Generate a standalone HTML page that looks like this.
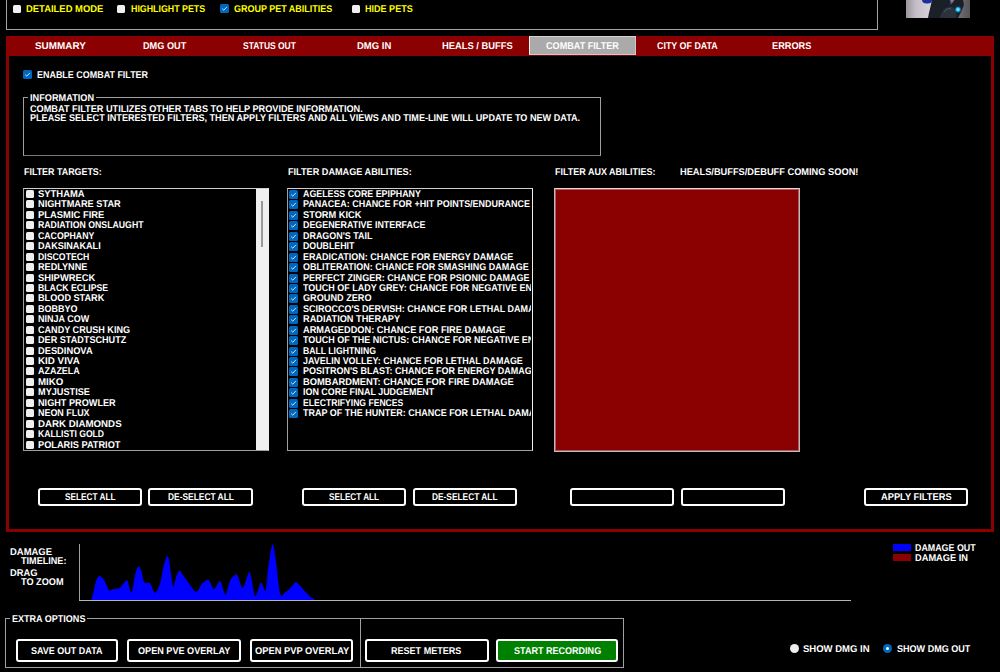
<!DOCTYPE html>
<html><head><meta charset="utf-8"><style>
html,body{margin:0;padding:0;background:#000;width:1000px;height:672px;overflow:hidden;font-family:"Liberation Sans",sans-serif}
</style></head><body>
<div style="position:absolute;left:6px;top:-10px;width:872px;height:40px;box-sizing:border-box;border:1px solid #a4a4a4"></div>
<div style="position:absolute;left:13px;top:5px;width:8px;height:8px;background:#efefef;border-radius:1.5px"></div>
<div style="position:absolute;left:117px;top:5px;width:8px;height:8px;background:#efefef;border-radius:1.5px"></div>
<div style="position:absolute;left:220px;top:4px;width:9px;height:9px;background:#0067c0;border-radius:1.5px"><svg width="9" height="9" style="position:absolute;left:0;top:0"><path d="M2.2 4.6 L3.8 6.2 L6.9 2.9" fill="none" stroke="#d0e4f7" stroke-width="1"/></svg></div>
<div style="position:absolute;left:352px;top:5px;width:8px;height:8px;background:#efefef;border-radius:1.5px"></div>
<svg style="position:absolute;left:906px;top:0" width="64" height="18" viewBox="0 0 64 18">
<defs><linearGradient id="g1" x1="0" y1="0" x2="1" y2="0"><stop offset="0" stop-color="#9a949c"/><stop offset="0.15" stop-color="#c4bcc6"/><stop offset="0.38" stop-color="#d8d2da"/><stop offset="0.62" stop-color="#8c8a8e"/><stop offset="1" stop-color="#555456"/></linearGradient>
<radialGradient id="g2"><stop offset="0" stop-color="#b0ffff"/><stop offset="0.45" stop-color="#20c8ff"/><stop offset="1" stop-color="#0090ff" stop-opacity="0"/></radialGradient></defs>
<rect width="64" height="18" fill="url(#g1)"/>
<path d="M26,0 L44,0 L45.5,4 L48.5,0 L57,0 L58,5 L55,12 L52,18 L22,18 C23,12 25,5 26,0 Z" fill="#1b1f27"/>
<path d="M34,18 C35,11 40,6 46,7 C50,9 51,13 50,18 Z" fill="#2c323c"/>
<path d="M38,12 C40,9 43,8 45,9" stroke="#5a6472" stroke-width="0.8" fill="none"/>
<path d="M16,0 L26,0 L25.5,2.5 C23,4 19,4 16.5,2 Z" fill="#1830a0"/>
<path d="M44,2 L45.5,2.5 L45,4.5 L43.8,4 Z" fill="#2040c0"/>
<circle cx="52" cy="9.5" r="3.6" fill="url(#g2)"/>
</svg>
<div style="position:absolute;left:6px;top:36px;width:988px;height:496px;background:#8b0000"></div>
<div style="position:absolute;left:9px;top:56px;width:982px;height:473px;background:#000"></div>
<div style="position:absolute;left:529px;top:36px;width:107px;height:19px;box-sizing:border-box;background:#aaaaaa;border:1px solid #c4cccc;border-left-color:#f4f4f4;border-top-color:#d4d4d4"></div>
<div style="position:absolute;left:23px;top:70px;width:9px;height:9px;background:#0067c0;border-radius:1.5px"><svg width="9" height="9" style="position:absolute;left:0;top:0"><path d="M2.2 4.6 L3.8 6.2 L6.9 2.9" fill="none" stroke="#d0e4f7" stroke-width="1"/></svg></div>
<div style="position:absolute;left:23px;top:97px;width:578px;height:59px;box-sizing:border-box;border:1px solid #a0a0a0;border-bottom-color:#787878"></div>
<div style="position:absolute;left:28px;top:94px;width:68px;height:6px;background:#000"></div>
<div style="position:absolute;left:23px;top:188px;width:246px;height:263px;box-sizing:border-box;border:1px solid #a0a0a0;border-top-color:#d0d0d0;border-right-color:#f0f0f0"></div>
<div style="position:absolute;left:256px;top:189px;width:12px;height:261px;background:#f0f0f0"></div>
<div style="position:absolute;left:261px;top:201px;width:2px;height:46px;background:#9a9a9a"></div>
<div style="position:absolute;left:26px;top:190px;width:8px;height:8px;background:#efefef;border-radius:1.5px"></div>
<div style="position:absolute;left:26px;top:200px;width:8px;height:8px;background:#efefef;border-radius:1.5px"></div>
<div style="position:absolute;left:26px;top:211px;width:8px;height:8px;background:#efefef;border-radius:1.5px"></div>
<div style="position:absolute;left:26px;top:221px;width:8px;height:8px;background:#efefef;border-radius:1.5px"></div>
<div style="position:absolute;left:26px;top:232px;width:8px;height:8px;background:#efefef;border-radius:1.5px"></div>
<div style="position:absolute;left:26px;top:242px;width:8px;height:8px;background:#efefef;border-radius:1.5px"></div>
<div style="position:absolute;left:26px;top:253px;width:8px;height:8px;background:#efefef;border-radius:1.5px"></div>
<div style="position:absolute;left:26px;top:263px;width:8px;height:8px;background:#efefef;border-radius:1.5px"></div>
<div style="position:absolute;left:26px;top:274px;width:8px;height:8px;background:#efefef;border-radius:1.5px"></div>
<div style="position:absolute;left:26px;top:284px;width:8px;height:8px;background:#efefef;border-radius:1.5px"></div>
<div style="position:absolute;left:26px;top:294px;width:8px;height:8px;background:#efefef;border-radius:1.5px"></div>
<div style="position:absolute;left:26px;top:305px;width:8px;height:8px;background:#efefef;border-radius:1.5px"></div>
<div style="position:absolute;left:26px;top:315px;width:8px;height:8px;background:#efefef;border-radius:1.5px"></div>
<div style="position:absolute;left:26px;top:326px;width:8px;height:8px;background:#efefef;border-radius:1.5px"></div>
<div style="position:absolute;left:26px;top:336px;width:8px;height:8px;background:#efefef;border-radius:1.5px"></div>
<div style="position:absolute;left:26px;top:347px;width:8px;height:8px;background:#efefef;border-radius:1.5px"></div>
<div style="position:absolute;left:26px;top:357px;width:8px;height:8px;background:#efefef;border-radius:1.5px"></div>
<div style="position:absolute;left:26px;top:367px;width:8px;height:8px;background:#efefef;border-radius:1.5px"></div>
<div style="position:absolute;left:26px;top:378px;width:8px;height:8px;background:#efefef;border-radius:1.5px"></div>
<div style="position:absolute;left:26px;top:388px;width:8px;height:8px;background:#efefef;border-radius:1.5px"></div>
<div style="position:absolute;left:26px;top:399px;width:8px;height:8px;background:#efefef;border-radius:1.5px"></div>
<div style="position:absolute;left:26px;top:409px;width:8px;height:8px;background:#efefef;border-radius:1.5px"></div>
<div style="position:absolute;left:26px;top:420px;width:8px;height:8px;background:#efefef;border-radius:1.5px"></div>
<div style="position:absolute;left:26px;top:430px;width:8px;height:8px;background:#efefef;border-radius:1.5px"></div>
<div style="position:absolute;left:26px;top:441px;width:8px;height:8px;background:#efefef;border-radius:1.5px"></div>
<div style="position:absolute;left:287px;top:188px;width:246px;height:263px;box-sizing:border-box;border:1px solid #a0a0a0;border-top-color:#d0d0d0;border-right-color:#f0f0f0"></div>
<div style="position:absolute;left:289px;top:190px;width:9px;height:9px;background:#0067c0;border-radius:1.5px"><svg width="9" height="9" style="position:absolute;left:0;top:0"><path d="M2.2 4.6 L3.8 6.2 L6.9 2.9" fill="none" stroke="#d0e4f7" stroke-width="1"/></svg></div>
<div style="position:absolute;left:289px;top:200px;width:9px;height:9px;background:#0067c0;border-radius:1.5px"><svg width="9" height="9" style="position:absolute;left:0;top:0"><path d="M2.2 4.6 L3.8 6.2 L6.9 2.9" fill="none" stroke="#d0e4f7" stroke-width="1"/></svg></div>
<div style="position:absolute;left:289px;top:211px;width:9px;height:9px;background:#0067c0;border-radius:1.5px"><svg width="9" height="9" style="position:absolute;left:0;top:0"><path d="M2.2 4.6 L3.8 6.2 L6.9 2.9" fill="none" stroke="#d0e4f7" stroke-width="1"/></svg></div>
<div style="position:absolute;left:289px;top:221px;width:9px;height:9px;background:#0067c0;border-radius:1.5px"><svg width="9" height="9" style="position:absolute;left:0;top:0"><path d="M2.2 4.6 L3.8 6.2 L6.9 2.9" fill="none" stroke="#d0e4f7" stroke-width="1"/></svg></div>
<div style="position:absolute;left:289px;top:232px;width:9px;height:9px;background:#0067c0;border-radius:1.5px"><svg width="9" height="9" style="position:absolute;left:0;top:0"><path d="M2.2 4.6 L3.8 6.2 L6.9 2.9" fill="none" stroke="#d0e4f7" stroke-width="1"/></svg></div>
<div style="position:absolute;left:289px;top:242px;width:9px;height:9px;background:#0067c0;border-radius:1.5px"><svg width="9" height="9" style="position:absolute;left:0;top:0"><path d="M2.2 4.6 L3.8 6.2 L6.9 2.9" fill="none" stroke="#d0e4f7" stroke-width="1"/></svg></div>
<div style="position:absolute;left:289px;top:253px;width:9px;height:9px;background:#0067c0;border-radius:1.5px"><svg width="9" height="9" style="position:absolute;left:0;top:0"><path d="M2.2 4.6 L3.8 6.2 L6.9 2.9" fill="none" stroke="#d0e4f7" stroke-width="1"/></svg></div>
<div style="position:absolute;left:289px;top:263px;width:9px;height:9px;background:#0067c0;border-radius:1.5px"><svg width="9" height="9" style="position:absolute;left:0;top:0"><path d="M2.2 4.6 L3.8 6.2 L6.9 2.9" fill="none" stroke="#d0e4f7" stroke-width="1"/></svg></div>
<div style="position:absolute;left:289px;top:274px;width:9px;height:9px;background:#0067c0;border-radius:1.5px"><svg width="9" height="9" style="position:absolute;left:0;top:0"><path d="M2.2 4.6 L3.8 6.2 L6.9 2.9" fill="none" stroke="#d0e4f7" stroke-width="1"/></svg></div>
<div style="position:absolute;left:289px;top:284px;width:9px;height:9px;background:#0067c0;border-radius:1.5px"><svg width="9" height="9" style="position:absolute;left:0;top:0"><path d="M2.2 4.6 L3.8 6.2 L6.9 2.9" fill="none" stroke="#d0e4f7" stroke-width="1"/></svg></div>
<div style="position:absolute;left:289px;top:294px;width:9px;height:9px;background:#0067c0;border-radius:1.5px"><svg width="9" height="9" style="position:absolute;left:0;top:0"><path d="M2.2 4.6 L3.8 6.2 L6.9 2.9" fill="none" stroke="#d0e4f7" stroke-width="1"/></svg></div>
<div style="position:absolute;left:289px;top:305px;width:9px;height:9px;background:#0067c0;border-radius:1.5px"><svg width="9" height="9" style="position:absolute;left:0;top:0"><path d="M2.2 4.6 L3.8 6.2 L6.9 2.9" fill="none" stroke="#d0e4f7" stroke-width="1"/></svg></div>
<div style="position:absolute;left:289px;top:315px;width:9px;height:9px;background:#0067c0;border-radius:1.5px"><svg width="9" height="9" style="position:absolute;left:0;top:0"><path d="M2.2 4.6 L3.8 6.2 L6.9 2.9" fill="none" stroke="#d0e4f7" stroke-width="1"/></svg></div>
<div style="position:absolute;left:289px;top:326px;width:9px;height:9px;background:#0067c0;border-radius:1.5px"><svg width="9" height="9" style="position:absolute;left:0;top:0"><path d="M2.2 4.6 L3.8 6.2 L6.9 2.9" fill="none" stroke="#d0e4f7" stroke-width="1"/></svg></div>
<div style="position:absolute;left:289px;top:336px;width:9px;height:9px;background:#0067c0;border-radius:1.5px"><svg width="9" height="9" style="position:absolute;left:0;top:0"><path d="M2.2 4.6 L3.8 6.2 L6.9 2.9" fill="none" stroke="#d0e4f7" stroke-width="1"/></svg></div>
<div style="position:absolute;left:289px;top:347px;width:9px;height:9px;background:#0067c0;border-radius:1.5px"><svg width="9" height="9" style="position:absolute;left:0;top:0"><path d="M2.2 4.6 L3.8 6.2 L6.9 2.9" fill="none" stroke="#d0e4f7" stroke-width="1"/></svg></div>
<div style="position:absolute;left:289px;top:357px;width:9px;height:9px;background:#0067c0;border-radius:1.5px"><svg width="9" height="9" style="position:absolute;left:0;top:0"><path d="M2.2 4.6 L3.8 6.2 L6.9 2.9" fill="none" stroke="#d0e4f7" stroke-width="1"/></svg></div>
<div style="position:absolute;left:289px;top:367px;width:9px;height:9px;background:#0067c0;border-radius:1.5px"><svg width="9" height="9" style="position:absolute;left:0;top:0"><path d="M2.2 4.6 L3.8 6.2 L6.9 2.9" fill="none" stroke="#d0e4f7" stroke-width="1"/></svg></div>
<div style="position:absolute;left:289px;top:378px;width:9px;height:9px;background:#0067c0;border-radius:1.5px"><svg width="9" height="9" style="position:absolute;left:0;top:0"><path d="M2.2 4.6 L3.8 6.2 L6.9 2.9" fill="none" stroke="#d0e4f7" stroke-width="1"/></svg></div>
<div style="position:absolute;left:289px;top:388px;width:9px;height:9px;background:#0067c0;border-radius:1.5px"><svg width="9" height="9" style="position:absolute;left:0;top:0"><path d="M2.2 4.6 L3.8 6.2 L6.9 2.9" fill="none" stroke="#d0e4f7" stroke-width="1"/></svg></div>
<div style="position:absolute;left:289px;top:399px;width:9px;height:9px;background:#0067c0;border-radius:1.5px"><svg width="9" height="9" style="position:absolute;left:0;top:0"><path d="M2.2 4.6 L3.8 6.2 L6.9 2.9" fill="none" stroke="#d0e4f7" stroke-width="1"/></svg></div>
<div style="position:absolute;left:289px;top:409px;width:9px;height:9px;background:#0067c0;border-radius:1.5px"><svg width="9" height="9" style="position:absolute;left:0;top:0"><path d="M2.2 4.6 L3.8 6.2 L6.9 2.9" fill="none" stroke="#d0e4f7" stroke-width="1"/></svg></div>
<div style="position:absolute;left:554px;top:188px;width:246px;height:264px;box-sizing:border-box;border:1px solid #b8bec6;border-top-color:#dcdcdc;background:#8b0000;box-shadow:inset 0 0 0 1px rgba(255,190,190,0.45)"></div>
<div style="position:absolute;left:38px;top:488px;width:104px;height:18px;box-sizing:border-box;border:2px solid #fff;border-radius:3px;background:#000"></div>
<div style="position:absolute;left:148px;top:488px;width:105px;height:18px;box-sizing:border-box;border:2px solid #fff;border-radius:3px;background:#000"></div>
<div style="position:absolute;left:302px;top:488px;width:104px;height:18px;box-sizing:border-box;border:2px solid #fff;border-radius:3px;background:#000"></div>
<div style="position:absolute;left:413px;top:488px;width:104px;height:18px;box-sizing:border-box;border:2px solid #fff;border-radius:3px;background:#000"></div>
<div style="position:absolute;left:570px;top:488px;width:104px;height:18px;box-sizing:border-box;border:2px solid #fff;border-radius:3px;background:#000"></div>
<div style="position:absolute;left:681px;top:488px;width:104px;height:18px;box-sizing:border-box;border:2px solid #fff;border-radius:3px;background:#000"></div>
<div style="position:absolute;left:864px;top:488px;width:104px;height:18px;box-sizing:border-box;border:2px solid #fff;border-radius:3px;background:#000"></div>
<div style="position:absolute;left:79px;top:544px;width:1px;height:57px;background:#a0a0a0"></div>
<div style="position:absolute;left:79px;top:600px;width:772px;height:1px;background:#b4b4b4"></div>
<svg style="position:absolute;left:0;top:0" width="1000" height="672"><path d="M91.2,600.5 C91.60,599.02 92.80,594.82 93.60,591.60 C94.40,588.38 95.07,583.80 96.00,581.20 C96.93,578.60 98.13,576.53 99.20,576.00 C100.27,575.47 101.47,577.13 102.40,578.00 C103.33,578.87 103.73,579.20 104.80,581.20 C105.87,583.20 107.87,588.47 108.80,590.00 C109.73,591.53 109.47,590.60 110.40,590.40 C111.33,590.20 112.93,589.17 114.40,588.80 C115.87,588.43 118.00,588.67 119.20,588.20 C120.40,587.73 120.47,587.30 121.60,586.00 C122.73,584.70 124.93,581.07 126.00,580.40 C127.07,579.73 127.07,580.00 128.00,582.00 C128.93,584.00 130.40,593.73 131.60,592.40 C132.80,591.07 134.07,578.33 135.20,574.00 C136.33,569.67 137.40,566.93 138.40,566.40 C139.40,565.87 140.20,568.13 141.20,570.80 C142.20,573.47 143.13,580.43 144.40,582.40 C145.67,584.37 147.67,582.13 148.80,582.60 C149.93,583.07 150.13,583.50 151.20,585.20 C152.27,586.90 153.73,593.07 155.20,592.80 C156.67,592.53 158.58,588.10 160.00,583.60 C161.42,579.10 162.55,570.30 163.70,565.80 C164.85,561.30 165.98,557.52 166.90,556.60 C167.82,555.68 168.50,557.23 169.20,560.30 C169.90,563.37 170.40,570.62 171.10,575.00 C171.80,579.38 172.57,586.28 173.40,586.60 C174.23,586.92 175.10,579.60 176.10,576.90 C177.10,574.20 178.25,570.72 179.40,570.40 C180.55,570.08 181.62,573.15 183.00,575.00 C184.38,576.85 185.53,578.72 187.70,581.50 C189.87,584.28 193.70,591.23 196.00,591.70 C198.30,592.17 199.67,586.23 201.50,584.30 C203.33,582.37 205.62,580.57 207.00,580.10 C208.38,579.63 208.63,580.03 209.80,581.50 C210.97,582.97 212.38,588.93 214.00,588.90 C215.62,588.87 218.20,582.07 219.50,581.30 C220.80,580.53 220.80,582.12 221.80,584.30 C222.80,586.48 224.12,595.02 225.50,594.40 C226.88,593.78 228.47,583.87 230.10,580.60 C231.73,577.33 234.02,575.57 235.30,574.80 C236.58,574.03 236.55,573.87 237.80,576.00 C239.05,578.13 240.95,588.22 242.80,587.60 C244.65,586.98 247.50,574.07 248.90,572.30 C250.30,570.53 250.13,573.07 251.20,577.00 C252.27,580.93 253.68,594.98 255.30,595.90 C256.92,596.82 259.20,583.38 260.90,582.50 C262.60,581.62 264.28,593.07 265.50,590.60 C266.72,588.13 267.05,575.40 268.20,567.70 C269.35,560.00 271.17,545.93 272.40,544.40 C273.63,542.87 274.30,550.30 275.60,558.50 C276.90,566.70 278.65,587.92 280.20,593.60 C281.75,599.28 283.20,593.53 284.90,592.60 C286.60,591.67 288.63,589.72 290.40,588.00 C292.17,586.28 293.97,582.77 295.50,582.30 C297.03,581.83 297.37,583.02 299.60,585.20 C301.83,587.38 306.12,592.85 308.90,595.40 C311.68,597.95 315.07,599.65 316.30,600.50 Z" fill="#0000ff"/></svg>
<div style="position:absolute;left:79px;top:600px;width:772px;height:1px;background:#b4b4b4"></div>
<div style="position:absolute;left:893px;top:544px;width:18px;height:7px;background:#0000ff"></div>
<div style="position:absolute;left:893px;top:554px;width:18px;height:7px;background:#8b0000"></div>
<div style="position:absolute;left:5px;top:618px;width:619px;height:50px;box-sizing:border-box;border:1px solid #a0a0a0"></div>
<div style="position:absolute;left:10px;top:614px;width:77px;height:9px;background:#000"></div>
<div style="position:absolute;left:360px;top:618px;width:1px;height:50px;background:#a0a0a0"></div>
<div style="position:absolute;left:16px;top:639px;width:102px;height:23px;box-sizing:border-box;border:2px solid #fff;border-radius:3px;background:#000"></div>
<div style="position:absolute;left:127px;top:639px;width:114px;height:23px;box-sizing:border-box;border:2px solid #fff;border-radius:3px;background:#000"></div>
<div style="position:absolute;left:250px;top:639px;width:103px;height:23px;box-sizing:border-box;border:2px solid #fff;border-radius:3px;background:#000"></div>
<div style="position:absolute;left:365px;top:639px;width:124px;height:23px;box-sizing:border-box;border:2px solid #fff;border-radius:3px;background:#000"></div>
<div style="position:absolute;left:496px;top:639px;width:122px;height:23px;box-sizing:border-box;border:2px solid #fff;border-radius:3px;background:#008000"></div>
<div style="position:absolute;left:790px;top:644px;width:9px;height:9px;border-radius:50%;background:#efefef"></div>
<div style="position:absolute;left:883px;top:644px;width:9px;height:9px;border-radius:50%;background:#0067c0"><div style="position:absolute;left:3px;top:3px;width:3px;height:3px;border-radius:50%;background:#fff"></div></div>
<div style="position:absolute;left:26.00px;top:5px;font:bold 9.8px/10px 'Liberation Sans',sans-serif;text-rendering:geometricPrecision;color:#ffff00;white-space:pre;transform:scaleX(0.9625);transform-origin:0 0">DETAILED MODE</div>
<div style="position:absolute;left:131.00px;top:5px;font:bold 9.8px/10px 'Liberation Sans',sans-serif;text-rendering:geometricPrecision;color:#ffff00;white-space:pre;transform:scaleX(0.9024);transform-origin:0 0">HIGHLIGHT PETS</div>
<div style="position:absolute;left:234.00px;top:5px;font:bold 9.8px/10px 'Liberation Sans',sans-serif;text-rendering:geometricPrecision;color:#ffff00;white-space:pre;transform:scaleX(0.9159);transform-origin:0 0">GROUP PET ABILITIES</div>
<div style="position:absolute;left:365.00px;top:5px;font:bold 9.8px/10px 'Liberation Sans',sans-serif;text-rendering:geometricPrecision;color:#ffff00;white-space:pre;transform:scaleX(0.9231);transform-origin:0 0">HIDE PETS</div>
<div style="position:absolute;left:34.50px;top:42px;font:bold 9.8px/10px 'Liberation Sans',sans-serif;text-rendering:geometricPrecision;color:#ffffff;white-space:pre;transform:scaleX(1.0100);transform-origin:0 0">SUMMARY</div>
<div style="position:absolute;left:143.00px;top:42px;font:bold 9.8px/10px 'Liberation Sans',sans-serif;text-rendering:geometricPrecision;color:#ffffff;white-space:pre;transform:scaleX(0.9348);transform-origin:0 0">DMG OUT</div>
<div style="position:absolute;left:242.60px;top:42px;font:bold 9.8px/10px 'Liberation Sans',sans-serif;text-rendering:geometricPrecision;color:#ffffff;white-space:pre;transform:scaleX(0.8656);transform-origin:0 0">STATUS OUT</div>
<div style="position:absolute;left:356.60px;top:42px;font:bold 9.8px/10px 'Liberation Sans',sans-serif;text-rendering:geometricPrecision;color:#ffffff;white-space:pre;transform:scaleX(0.9686);transform-origin:0 0">DMG IN</div>
<div style="position:absolute;left:442.40px;top:42px;font:bold 9.8px/10px 'Liberation Sans',sans-serif;text-rendering:geometricPrecision;color:#ffffff;white-space:pre;transform:scaleX(0.9541);transform-origin:0 0">HEALS / BUFFS</div>
<div style="position:absolute;left:546.00px;top:42px;font:bold 9.8px/10px 'Liberation Sans',sans-serif;text-rendering:geometricPrecision;color:#ffffff;white-space:pre;transform:scaleX(0.9282);transform-origin:0 0">COMBAT FILTER</div>
<div style="position:absolute;left:657.00px;top:42px;font:bold 9.8px/10px 'Liberation Sans',sans-serif;text-rendering:geometricPrecision;color:#ffffff;white-space:pre;transform:scaleX(0.9075);transform-origin:0 0">CITY OF DATA</div>
<div style="position:absolute;left:771.80px;top:42px;font:bold 9.8px/10px 'Liberation Sans',sans-serif;text-rendering:geometricPrecision;color:#ffffff;white-space:pre;transform:scaleX(0.9381);transform-origin:0 0">ERRORS</div>
<div style="position:absolute;left:37.20px;top:71px;font:bold 9.8px/10px 'Liberation Sans',sans-serif;text-rendering:geometricPrecision;color:#ffffff;white-space:pre;transform:scaleX(0.9136);transform-origin:0 0">ENABLE COMBAT FILTER</div>
<div style="position:absolute;left:29.80px;top:94px;font:bold 9.8px/10px 'Liberation Sans',sans-serif;text-rendering:geometricPrecision;color:#ffffff;white-space:pre;transform:scaleX(0.9368);transform-origin:0 0">INFORMATION</div>
<div style="position:absolute;left:30.00px;top:105px;font:bold 9.8px/10px 'Liberation Sans',sans-serif;text-rendering:geometricPrecision;color:#ffffff;white-space:pre;transform:scaleX(0.9348);transform-origin:0 0">COMBAT FILTER UTILIZES OTHER TABS TO HELP PROVIDE INFORMATION.</div>
<div style="position:absolute;left:30.00px;top:114px;font:bold 9.8px/10px 'Liberation Sans',sans-serif;text-rendering:geometricPrecision;color:#ffffff;white-space:pre;transform:scaleX(0.9275);transform-origin:0 0">PLEASE SELECT INTERESTED FILTERS, THEN APPLY FILTERS AND ALL VIEWS AND TIME-LINE WILL UPDATE TO NEW DATA.</div>
<div style="position:absolute;left:23.80px;top:168px;font:bold 9.8px/10px 'Liberation Sans',sans-serif;text-rendering:geometricPrecision;color:#ffffff;white-space:pre;transform:scaleX(0.9082);transform-origin:0 0">FILTER TARGETS:</div>
<div style="position:absolute;left:288.00px;top:168px;font:bold 9.8px/10px 'Liberation Sans',sans-serif;text-rendering:geometricPrecision;color:#ffffff;white-space:pre;transform:scaleX(0.9318);transform-origin:0 0">FILTER DAMAGE ABILITIES:</div>
<div style="position:absolute;left:555.00px;top:168px;font:bold 9.8px/10px 'Liberation Sans',sans-serif;text-rendering:geometricPrecision;color:#ffffff;white-space:pre;transform:scaleX(0.9174);transform-origin:0 0">FILTER AUX ABILITIES:</div>
<div style="position:absolute;left:679.60px;top:168px;font:bold 9.8px/10px 'Liberation Sans',sans-serif;text-rendering:geometricPrecision;color:#ffffff;white-space:pre;transform:scaleX(0.9447);transform-origin:0 0">HEALS/BUFFS/DEBUFF COMING SOON!</div>
<div style="position:absolute;left:38.00px;top:190px;font:bold 9.8px/10px 'Liberation Sans',sans-serif;text-rendering:geometricPrecision;color:#ffffff;white-space:pre;transform:scaleX(0.9625);transform-origin:0 0">SYTHAMA</div>
<div style="position:absolute;left:38.00px;top:200px;font:bold 9.8px/10px 'Liberation Sans',sans-serif;text-rendering:geometricPrecision;color:#ffffff;white-space:pre;transform:scaleX(0.9398);transform-origin:0 0">NIGHTMARE STAR</div>
<div style="position:absolute;left:38.00px;top:211px;font:bold 9.8px/10px 'Liberation Sans',sans-serif;text-rendering:geometricPrecision;color:#ffffff;white-space:pre;transform:scaleX(0.9594);transform-origin:0 0">PLASMIC FIRE</div>
<div style="position:absolute;left:38.00px;top:221px;font:bold 9.8px/10px 'Liberation Sans',sans-serif;text-rendering:geometricPrecision;color:#ffffff;white-space:pre;transform:scaleX(0.8908);transform-origin:0 0">RADIATION ONSLAUGHT</div>
<div style="position:absolute;left:38.00px;top:232px;font:bold 9.8px/10px 'Liberation Sans',sans-serif;text-rendering:geometricPrecision;color:#ffffff;white-space:pre;transform:scaleX(0.8921);transform-origin:0 0">CACOPHANY</div>
<div style="position:absolute;left:38.00px;top:242px;font:bold 9.8px/10px 'Liberation Sans',sans-serif;text-rendering:geometricPrecision;color:#ffffff;white-space:pre;transform:scaleX(0.9284);transform-origin:0 0">DAKSINAKALI</div>
<div style="position:absolute;left:38.00px;top:253px;font:bold 9.8px/10px 'Liberation Sans',sans-serif;text-rendering:geometricPrecision;color:#ffffff;white-space:pre;transform:scaleX(0.8912);transform-origin:0 0">DISCOTECH</div>
<div style="position:absolute;left:38.00px;top:263px;font:bold 9.8px/10px 'Liberation Sans',sans-serif;text-rendering:geometricPrecision;color:#ffffff;white-space:pre;transform:scaleX(0.9321);transform-origin:0 0">REDLYNNE</div>
<div style="position:absolute;left:38.00px;top:274px;font:bold 9.8px/10px 'Liberation Sans',sans-serif;text-rendering:geometricPrecision;color:#ffffff;white-space:pre;transform:scaleX(0.9567);transform-origin:0 0">SHIPWRECK</div>
<div style="position:absolute;left:38.00px;top:284px;font:bold 9.8px/10px 'Liberation Sans',sans-serif;text-rendering:geometricPrecision;color:#ffffff;white-space:pre;transform:scaleX(0.8886);transform-origin:0 0">BLACK ECLIPSE</div>
<div style="position:absolute;left:38.00px;top:294px;font:bold 9.8px/10px 'Liberation Sans',sans-serif;text-rendering:geometricPrecision;color:#ffffff;white-space:pre;transform:scaleX(0.9324);transform-origin:0 0">BLOOD STARK</div>
<div style="position:absolute;left:38.00px;top:305px;font:bold 9.8px/10px 'Liberation Sans',sans-serif;text-rendering:geometricPrecision;color:#ffffff;white-space:pre;transform:scaleX(0.9186);transform-origin:0 0">BOBBYO</div>
<div style="position:absolute;left:38.00px;top:315px;font:bold 9.8px/10px 'Liberation Sans',sans-serif;text-rendering:geometricPrecision;color:#ffffff;white-space:pre;transform:scaleX(0.9179);transform-origin:0 0">NINJA COW</div>
<div style="position:absolute;left:38.00px;top:326px;font:bold 9.8px/10px 'Liberation Sans',sans-serif;text-rendering:geometricPrecision;color:#ffffff;white-space:pre;transform:scaleX(0.9253);transform-origin:0 0">CANDY CRUSH KING</div>
<div style="position:absolute;left:38.00px;top:336px;font:bold 9.8px/10px 'Liberation Sans',sans-serif;text-rendering:geometricPrecision;color:#ffffff;white-space:pre;transform:scaleX(0.9289);transform-origin:0 0">DER STADTSCHUTZ</div>
<div style="position:absolute;left:38.00px;top:347px;font:bold 9.8px/10px 'Liberation Sans',sans-serif;text-rendering:geometricPrecision;color:#ffffff;white-space:pre;transform:scaleX(0.9491);transform-origin:0 0">DESDINOVA</div>
<div style="position:absolute;left:38.00px;top:357px;font:bold 9.8px/10px 'Liberation Sans',sans-serif;text-rendering:geometricPrecision;color:#ffffff;white-space:pre;transform:scaleX(1.0000);transform-origin:0 0">KID VIVA</div>
<div style="position:absolute;left:38.00px;top:367px;font:bold 9.8px/10px 'Liberation Sans',sans-serif;text-rendering:geometricPrecision;color:#ffffff;white-space:pre;transform:scaleX(0.9130);transform-origin:0 0">AZAZELA</div>
<div style="position:absolute;left:38.00px;top:378px;font:bold 9.8px/10px 'Liberation Sans',sans-serif;text-rendering:geometricPrecision;color:#ffffff;white-space:pre;transform:scaleX(0.9880);transform-origin:0 0">MIKO</div>
<div style="position:absolute;left:38.00px;top:388px;font:bold 9.8px/10px 'Liberation Sans',sans-serif;text-rendering:geometricPrecision;color:#ffffff;white-space:pre;transform:scaleX(0.9345);transform-origin:0 0">MYJUSTISE</div>
<div style="position:absolute;left:38.00px;top:399px;font:bold 9.8px/10px 'Liberation Sans',sans-serif;text-rendering:geometricPrecision;color:#ffffff;white-space:pre;transform:scaleX(0.9325);transform-origin:0 0">NIGHT PROWLER</div>
<div style="position:absolute;left:38.00px;top:409px;font:bold 9.8px/10px 'Liberation Sans',sans-serif;text-rendering:geometricPrecision;color:#ffffff;white-space:pre;transform:scaleX(0.9107);transform-origin:0 0">NEON FLUX</div>
<div style="position:absolute;left:38.00px;top:420px;font:bold 9.8px/10px 'Liberation Sans',sans-serif;text-rendering:geometricPrecision;color:#ffffff;white-space:pre;transform:scaleX(0.9911);transform-origin:0 0">DARK DIAMONDS</div>
<div style="position:absolute;left:38.00px;top:430px;font:bold 9.8px/10px 'Liberation Sans',sans-serif;text-rendering:geometricPrecision;color:#ffffff;white-space:pre;transform:scaleX(0.8800);transform-origin:0 0">KALLISTI GOLD</div>
<div style="position:absolute;left:38.00px;top:441px;font:bold 9.8px/10px 'Liberation Sans',sans-serif;text-rendering:geometricPrecision;color:#ffffff;white-space:pre;transform:scaleX(0.9386);transform-origin:0 0">POLARIS PATRIOT</div>
<div style="position:absolute;left:64.50px;top:493px;font:bold 9.8px/10px 'Liberation Sans',sans-serif;text-rendering:geometricPrecision;color:#ffffff;white-space:pre;transform:scaleX(0.8417);transform-origin:0 0">SELECT ALL</div>
<div style="position:absolute;left:167.50px;top:493px;font:bold 9.8px/10px 'Liberation Sans',sans-serif;text-rendering:geometricPrecision;color:#ffffff;white-space:pre;transform:scaleX(0.8571);transform-origin:0 0">DE-SELECT ALL</div>
<div style="position:absolute;left:329.00px;top:493px;font:bold 9.8px/10px 'Liberation Sans',sans-serif;text-rendering:geometricPrecision;color:#ffffff;white-space:pre;transform:scaleX(0.8333);transform-origin:0 0">SELECT ALL</div>
<div style="position:absolute;left:431.80px;top:493px;font:bold 9.8px/10px 'Liberation Sans',sans-serif;text-rendering:geometricPrecision;color:#ffffff;white-space:pre;transform:scaleX(0.8519);transform-origin:0 0">DE-SELECT ALL</div>
<div style="position:absolute;left:881.00px;top:493px;font:bold 9.8px/10px 'Liberation Sans',sans-serif;text-rendering:geometricPrecision;color:#ffffff;white-space:pre;transform:scaleX(0.9486);transform-origin:0 0">APPLY FILTERS</div>
<div style="position:absolute;left:9.50px;top:548px;font:bold 9.8px/10px 'Liberation Sans',sans-serif;text-rendering:geometricPrecision;color:#ffffff;white-space:pre;transform:scaleX(0.9651);transform-origin:0 0">DAMAGE</div>
<div style="position:absolute;left:20.50px;top:557px;font:bold 9.8px/10px 'Liberation Sans',sans-serif;text-rendering:geometricPrecision;color:#ffffff;white-space:pre;transform:scaleX(0.9271);transform-origin:0 0">TIMELINE:</div>
<div style="position:absolute;left:9.50px;top:569px;font:bold 9.8px/10px 'Liberation Sans',sans-serif;text-rendering:geometricPrecision;color:#ffffff;white-space:pre;transform:scaleX(0.9483);transform-origin:0 0">DRAG</div>
<div style="position:absolute;left:20.50px;top:578px;font:bold 9.8px/10px 'Liberation Sans',sans-serif;text-rendering:geometricPrecision;color:#ffffff;white-space:pre;transform:scaleX(0.9333);transform-origin:0 0">TO ZOOM</div>
<div style="position:absolute;left:915.00px;top:544px;font:bold 9.8px/10px 'Liberation Sans',sans-serif;text-rendering:geometricPrecision;color:#ffffff;white-space:pre;transform:scaleX(0.9060);transform-origin:0 0">DAMAGE OUT</div>
<div style="position:absolute;left:915.00px;top:554px;font:bold 9.8px/10px 'Liberation Sans',sans-serif;text-rendering:geometricPrecision;color:#ffffff;white-space:pre;transform:scaleX(0.9464);transform-origin:0 0">DAMAGE IN</div>
<div style="position:absolute;left:11.70px;top:615px;font:bold 9.8px/10px 'Liberation Sans',sans-serif;text-rendering:geometricPrecision;color:#ffffff;white-space:pre;transform:scaleX(0.9215);transform-origin:0 0">EXTRA OPTIONS</div>
<div style="position:absolute;left:31.00px;top:647px;font:bold 9.8px/10px 'Liberation Sans',sans-serif;text-rendering:geometricPrecision;color:#ffffff;white-space:pre;transform:scaleX(0.9192);transform-origin:0 0">SAVE OUT DATA</div>
<div style="position:absolute;left:138.00px;top:647px;font:bold 9.8px/10px 'Liberation Sans',sans-serif;text-rendering:geometricPrecision;color:#ffffff;white-space:pre;transform:scaleX(0.9293);transform-origin:0 0">OPEN PVE OVERLAY</div>
<div style="position:absolute;left:254.50px;top:647px;font:bold 9.8px/10px 'Liberation Sans',sans-serif;text-rendering:geometricPrecision;color:#ffffff;white-space:pre;transform:scaleX(0.9520);transform-origin:0 0">OPEN PVP OVERLAY</div>
<div style="position:absolute;left:391.40px;top:647px;font:bold 9.8px/10px 'Liberation Sans',sans-serif;text-rendering:geometricPrecision;color:#ffffff;white-space:pre;transform:scaleX(0.9224);transform-origin:0 0">RESET METERS</div>
<div style="position:absolute;left:514.00px;top:647px;font:bold 9.8px/10px 'Liberation Sans',sans-serif;text-rendering:geometricPrecision;color:#ffffff;white-space:pre;transform:scaleX(0.9223);transform-origin:0 0">START RECORDING</div>
<div style="position:absolute;left:803.00px;top:645px;font:bold 9.8px/10px 'Liberation Sans',sans-serif;text-rendering:geometricPrecision;color:#ffffff;white-space:pre;transform:scaleX(0.9706);transform-origin:0 0">SHOW DMG IN</div>
<div style="position:absolute;left:896.60px;top:645px;font:bold 9.8px/10px 'Liberation Sans',sans-serif;text-rendering:geometricPrecision;color:#ffffff;white-space:pre;transform:scaleX(0.9225);transform-origin:0 0">SHOW DMG OUT</div>
<div style="position:absolute;left:288px;top:189px;width:243px;height:261px;overflow:hidden"><div style="position:absolute;left:14.50px;top:1px;font:bold 9.8px/10px 'Liberation Sans',sans-serif;text-rendering:geometricPrecision;color:#ffffff;white-space:pre;transform:scaleX(0.9023);transform-origin:0 0">AGELESS CORE EPIPHANY</div><div style="position:absolute;left:14.50px;top:11px;font:bold 9.8px/10px 'Liberation Sans',sans-serif;text-rendering:geometricPrecision;color:#ffffff;white-space:pre;transform:scaleX(0.9161);transform-origin:0 0">PANACEA: CHANCE FOR +HIT POINTS/ENDURANCE</div><div style="position:absolute;left:14.50px;top:22px;font:bold 9.8px/10px 'Liberation Sans',sans-serif;text-rendering:geometricPrecision;color:#ffffff;white-space:pre;transform:scaleX(0.9435);transform-origin:0 0">STORM KICK</div><div style="position:absolute;left:14.50px;top:32px;font:bold 9.8px/10px 'Liberation Sans',sans-serif;text-rendering:geometricPrecision;color:#ffffff;white-space:pre;transform:scaleX(0.9074);transform-origin:0 0">DEGENERATIVE INTERFACE</div><div style="position:absolute;left:14.50px;top:43px;font:bold 9.8px/10px 'Liberation Sans',sans-serif;text-rendering:geometricPrecision;color:#ffffff;white-space:pre;transform:scaleX(0.9118);transform-origin:0 0">DRAGON'S TAIL</div><div style="position:absolute;left:14.50px;top:53px;font:bold 9.8px/10px 'Liberation Sans',sans-serif;text-rendering:geometricPrecision;color:#ffffff;white-space:pre;transform:scaleX(0.9000);transform-origin:0 0">DOUBLEHIT</div><div style="position:absolute;left:14.50px;top:64px;font:bold 9.8px/10px 'Liberation Sans',sans-serif;text-rendering:geometricPrecision;color:#ffffff;white-space:pre;transform:scaleX(0.9188);transform-origin:0 0">ERADICATION: CHANCE FOR ENERGY DAMAGE</div><div style="position:absolute;left:14.50px;top:74px;font:bold 9.8px/10px 'Liberation Sans',sans-serif;text-rendering:geometricPrecision;color:#ffffff;white-space:pre;transform:scaleX(0.9179);transform-origin:0 0">OBLITERATION: CHANCE FOR SMASHING DAMAGE</div><div style="position:absolute;left:14.50px;top:85px;font:bold 9.8px/10px 'Liberation Sans',sans-serif;text-rendering:geometricPrecision;color:#ffffff;white-space:pre;transform:scaleX(0.9207);transform-origin:0 0">PERFECT ZINGER: CHANCE FOR PSIONIC DAMAGE</div><div style="position:absolute;left:14.50px;top:95px;font:bold 9.8px/10px 'Liberation Sans',sans-serif;text-rendering:geometricPrecision;color:#ffffff;white-space:pre;transform:scaleX(0.9174);transform-origin:0 0">TOUCH OF LADY GREY: CHANCE FOR NEGATIVE ENERGY DAMAGE</div><div style="position:absolute;left:14.50px;top:105px;font:bold 9.8px/10px 'Liberation Sans',sans-serif;text-rendering:geometricPrecision;color:#ffffff;white-space:pre;transform:scaleX(0.9329);transform-origin:0 0">GROUND ZERO</div><div style="position:absolute;left:14.50px;top:116px;font:bold 9.8px/10px 'Liberation Sans',sans-serif;text-rendering:geometricPrecision;color:#ffffff;white-space:pre;transform:scaleX(0.9174);transform-origin:0 0">SCIROCCO'S DERVISH: CHANCE FOR LETHAL DAMAGE</div><div style="position:absolute;left:14.50px;top:126px;font:bold 9.8px/10px 'Liberation Sans',sans-serif;text-rendering:geometricPrecision;color:#ffffff;white-space:pre;transform:scaleX(0.9408);transform-origin:0 0">RADIATION THERAPY</div><div style="position:absolute;left:14.50px;top:137px;font:bold 9.8px/10px 'Liberation Sans',sans-serif;text-rendering:geometricPrecision;color:#ffffff;white-space:pre;transform:scaleX(0.9419);transform-origin:0 0">ARMAGEDDON: CHANCE FOR FIRE DAMAGE</div><div style="position:absolute;left:14.50px;top:147px;font:bold 9.8px/10px 'Liberation Sans',sans-serif;text-rendering:geometricPrecision;color:#ffffff;white-space:pre;transform:scaleX(0.9174);transform-origin:0 0">TOUCH OF THE NICTUS: CHANCE FOR NEGATIVE ENERGY DAMAGE</div><div style="position:absolute;left:14.50px;top:158px;font:bold 9.8px/10px 'Liberation Sans',sans-serif;text-rendering:geometricPrecision;color:#ffffff;white-space:pre;transform:scaleX(0.8829);transform-origin:0 0">BALL LIGHTNING</div><div style="position:absolute;left:14.50px;top:168px;font:bold 9.8px/10px 'Liberation Sans',sans-serif;text-rendering:geometricPrecision;color:#ffffff;white-space:pre;transform:scaleX(0.9137);transform-origin:0 0">JAVELIN VOLLEY: CHANCE FOR LETHAL DAMAGE</div><div style="position:absolute;left:14.50px;top:178px;font:bold 9.8px/10px 'Liberation Sans',sans-serif;text-rendering:geometricPrecision;color:#ffffff;white-space:pre;transform:scaleX(0.9174);transform-origin:0 0">POSITRON'S BLAST: CHANCE FOR ENERGY DAMAGE</div><div style="position:absolute;left:14.50px;top:189px;font:bold 9.8px/10px 'Liberation Sans',sans-serif;text-rendering:geometricPrecision;color:#ffffff;white-space:pre;transform:scaleX(0.9564);transform-origin:0 0">BOMBARDMENT: CHANCE FOR FIRE DAMAGE</div><div style="position:absolute;left:14.50px;top:199px;font:bold 9.8px/10px 'Liberation Sans',sans-serif;text-rendering:geometricPrecision;color:#ffffff;white-space:pre;transform:scaleX(0.9111);transform-origin:0 0">ION CORE FINAL JUDGEMENT</div><div style="position:absolute;left:14.50px;top:210px;font:bold 9.8px/10px 'Liberation Sans',sans-serif;text-rendering:geometricPrecision;color:#ffffff;white-space:pre;transform:scaleX(0.8772);transform-origin:0 0">ELECTRIFYING FENCES</div><div style="position:absolute;left:14.50px;top:220px;font:bold 9.8px/10px 'Liberation Sans',sans-serif;text-rendering:geometricPrecision;color:#ffffff;white-space:pre;transform:scaleX(0.9174);transform-origin:0 0">TRAP OF THE HUNTER: CHANCE FOR LETHAL DAMAGE</div></div>
</body></html>
